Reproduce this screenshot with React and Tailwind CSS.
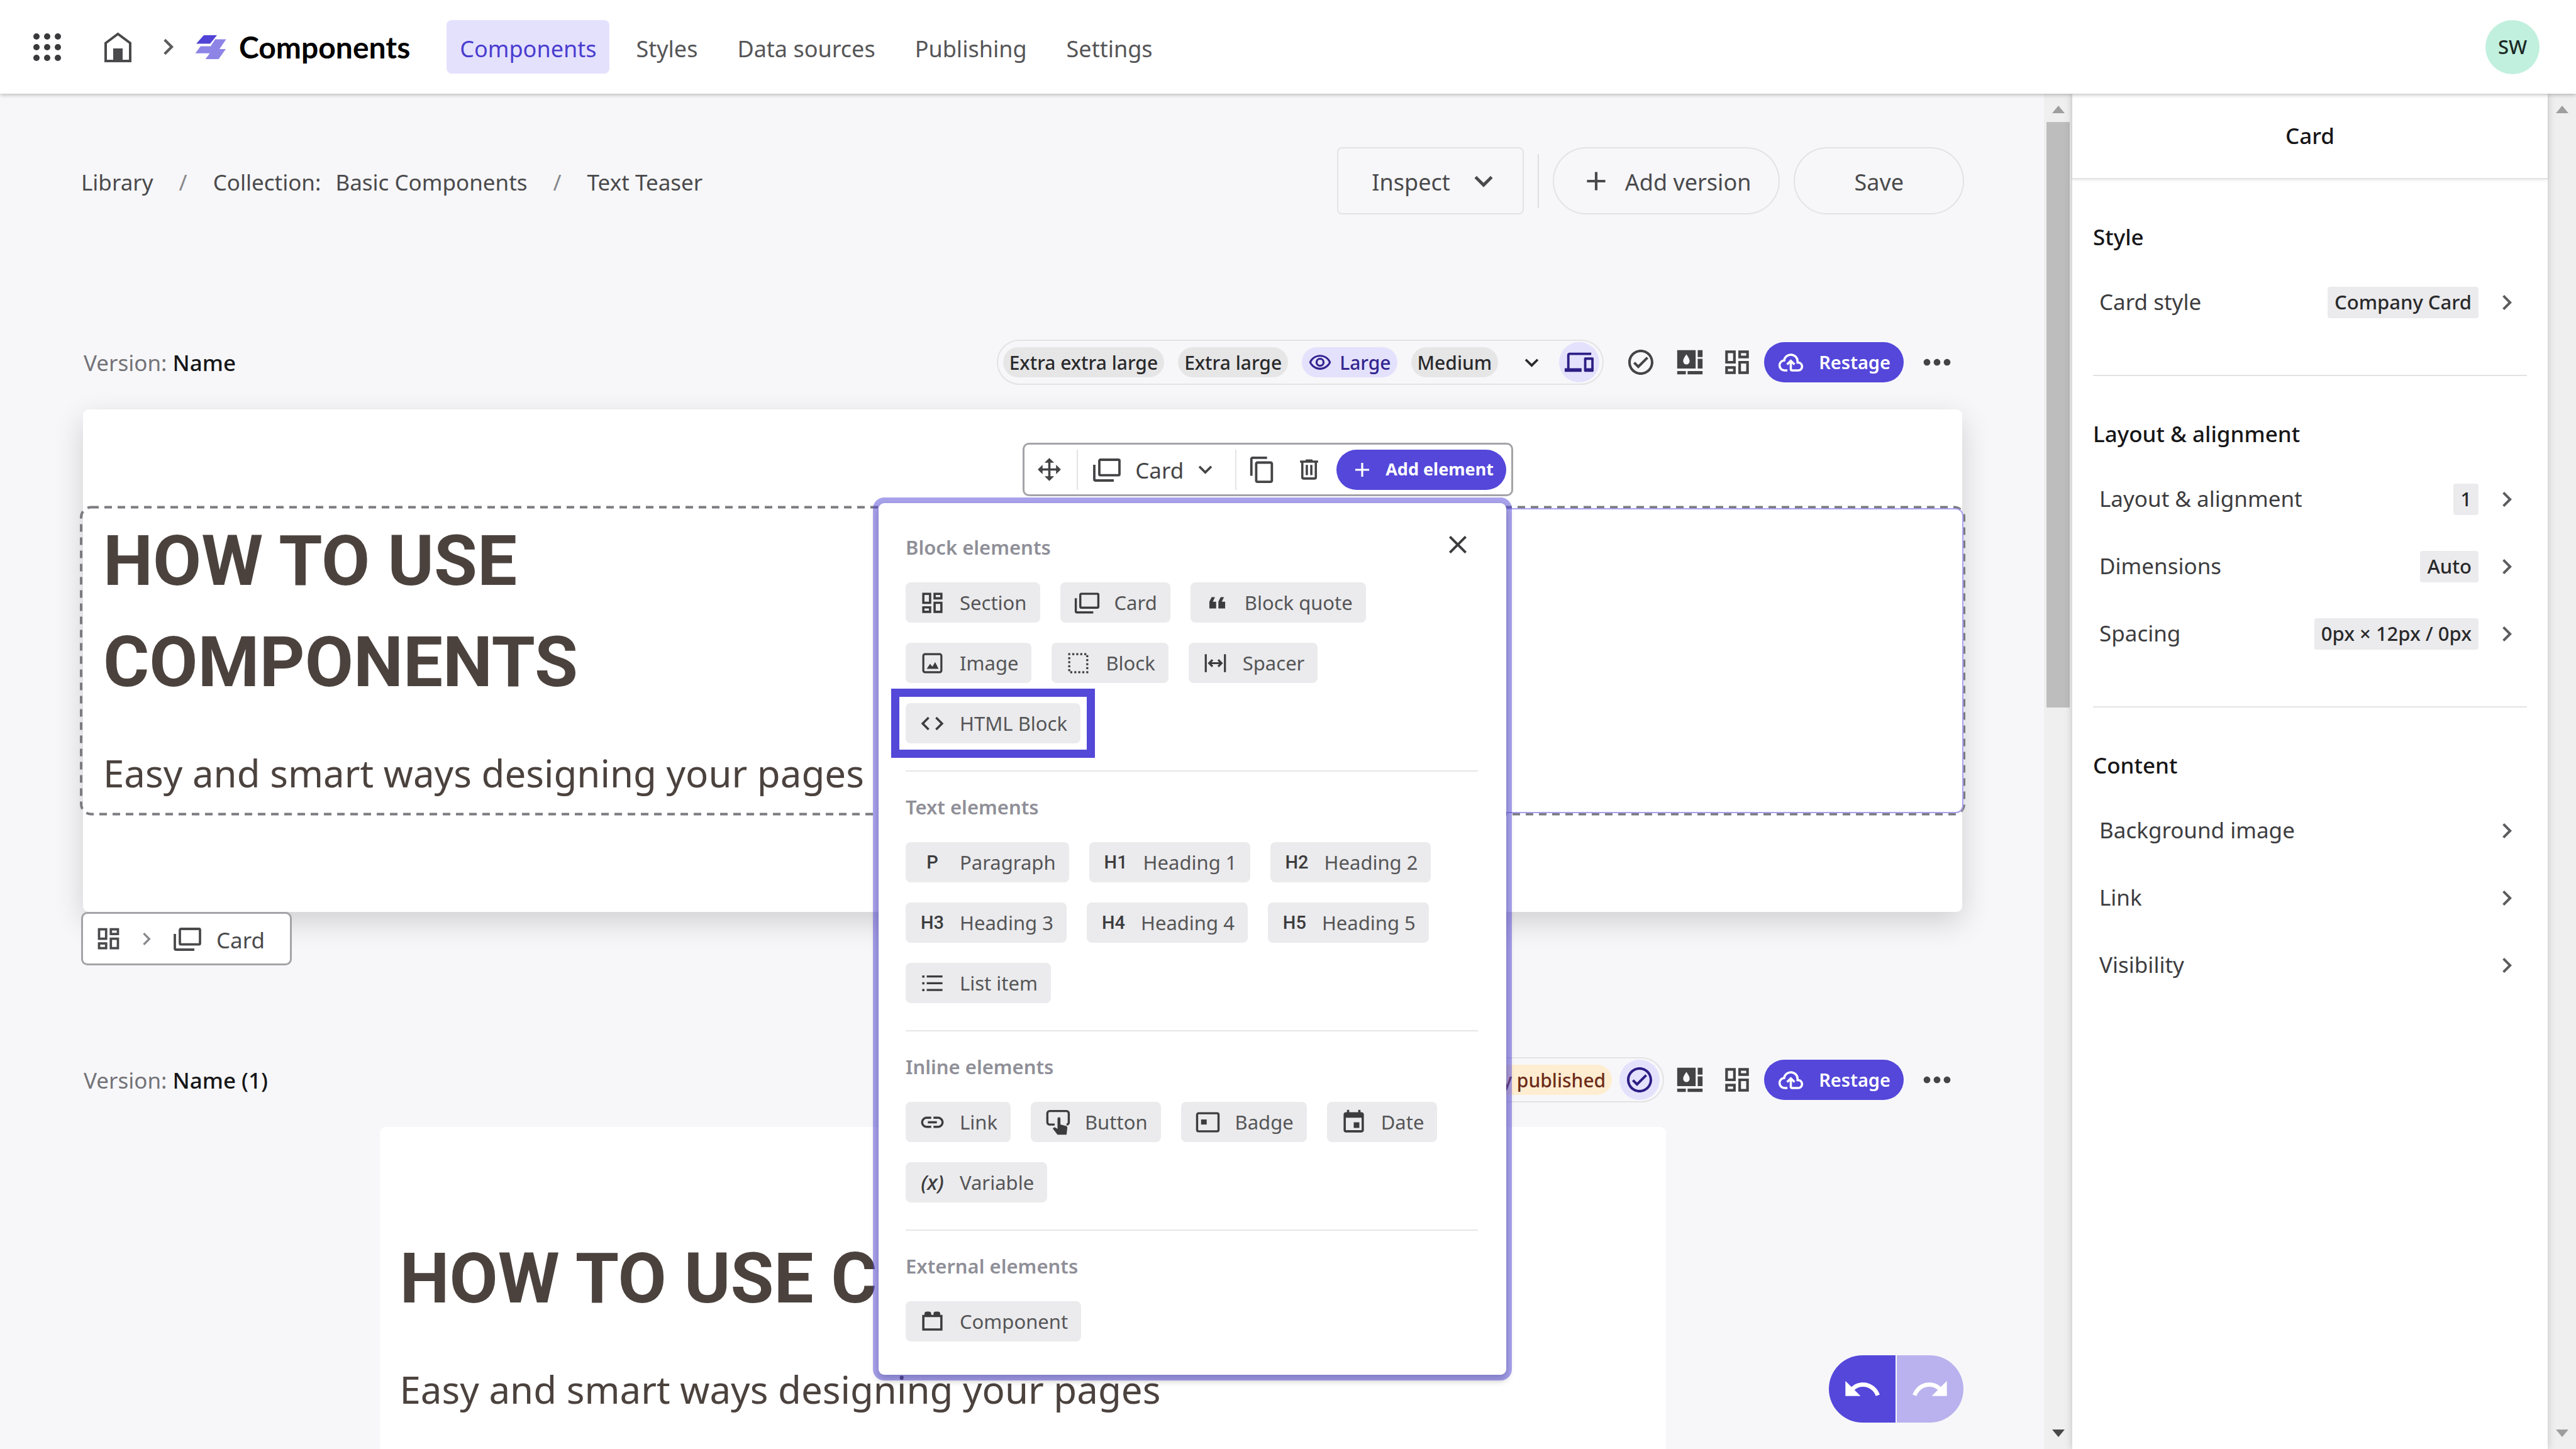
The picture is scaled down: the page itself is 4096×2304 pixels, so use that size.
import React from "react";
import {
  MdAdd,
  MdChevronRight,
  MdClose,
  MdCode,
  MdContentCopy,
  MdEvent,
  MdKeyboardArrowDown,
  MdLink,
  MdMoreHoriz,
  MdOutlineCheckCircle,
  MdOutlineDashboard,
  MdOutlineDevices,
  MdOutlineRemoveRedEye,
  MdRedo,
  MdUndo,
} from "react-icons/md";

const Svg = ({ className = "size-[43px]", children, ...rest }) => (
  <svg viewBox="0 0 24 24" fill="currentColor" aria-hidden="true" className={className} {...rest}>
    {children}
  </svg>
);

const CardIcon = ({ className }) => (
  <Svg className={className}>
    <g fill="none" stroke="currentColor" strokeWidth="1.9">
      <rect x="6" y="4" width="16" height="12.3" rx="0.8" />
      <path d="M2 8v11.5a1 1 0 0 0 1 1h14.5" />
    </g>
  </Svg>
);
const CloudIcon = ({ className }) => (
  <Svg className={className}>
    <path d="M6.5 20Q4.22 20 2.61 18.43 1 16.85 1 14.58 1 12.63 2.17 11.1 3.35 9.57 5.25 9.15 5.88 6.85 7.75 5.43 9.63 4 12 4 14.93 4 16.96 6.04 19 8.07 19 11 20.73 11.2 21.86 12.5 23 13.78 23 15.5 23 17.38 21.69 18.69 20.38 20 18.5 20H13Q12.18 20 11.59 19.41 11 18.83 11 18V12.85L9.4 14.4 8 13 12 9 16 13 14.6 14.4 13 12.85V18H18.5Q19.55 18 20.27 17.27 21 16.55 21 15.5 21 14.45 20.27 13.73 19.55 13 18.5 13H17V11Q17 8.93 15.54 7.46 14.08 6 12 6 9.93 6 8.46 7.46 7 8.93 7 11H6.5Q5.05 11 4.03 12.03 3 13.05 3 14.5 3 15.95 4.03 17 5.05 18 6.5 18H9V20Z" />
  </Svg>
);
const QuoteIcon = () => (
  <Svg>
    <path d="M10 7 8 11h3v6H5v-6l2-4h3m8 0-2 4h3v6h-6v-6l2-4h3Z" />
  </Svg>
);
const ImageIcon = () => (
  <Svg>
    <rect x="4" y="4" width="16" height="16" rx="1.5" fill="none" stroke="currentColor" strokeWidth="1.8" />
    <path d="M7 17l3-4.5 2 2.5 2.5-4L17.500 17z" />
  </Svg>
);
const BlockIcon = () => (
  <Svg>
    <path d="M4 4h16v16H4z" fill="none" stroke="currentColor" strokeWidth="1.8" strokeDasharray="1.8 1.755" strokeDashoffset="0.9" />
  </Svg>
);
const SpacerIcon = () => (
  <Svg>
    <g fill="none" stroke="currentColor" strokeWidth="1.8">
      <path d="M3.500 4v16M20.500 4v16M7 12h10M9.500 9 6.500 12l3 3M14.500 9l3 3-3 3" />
    </g>
  </Svg>
);
const ListIcon = () => (
  <Svg>
    <path d="M3 5h2v2H3zM3 11h2v2H3zM3 17h2v2H3zM7 5h14v1.900H7zM7 11h14v1.900H7zM7 17h14v1.900H7z" />
  </Svg>
);
const ButtonIcon = () => (
  <Svg>
    <path d="M9.500 14H5a2 2 0 0 1-2-2V4a2 2 0 0 1 2-2h15a2 2 0 0 1 2 2v8a2 2 0 0 1-2 2" fill="none" stroke="currentColor" strokeWidth="1.9" />
    <path d="M13.300 7.500a1.300 1.300 0 0 1 1.300 1.300v5.200l4.800 1.200c.900.200 1.400 1 1.300 1.900l-.700 5.900h-8L7.800 17.600l.800-.800c.400-.400 1-.400 1.500-.100l1.900 1.100v-9a1.300 1.300 0 0 1 1.300-1.300z" />
  </Svg>
);
const BadgeIcon = () => (
  <Svg>
    <rect x="2.500" y="4" width="19" height="16" rx="1.300" fill="none" stroke="currentColor" strokeWidth="1.9" />
    <path d="M6 9.500h5v4.500H6z" />
  </Svg>
);
const BrickIcon = () => (
  <Svg>
    <path d="M19 6V5a2 2 0 0 0-2-2h-2a2 2 0 0 0-2 2v1h-2V5a2 2 0 0 0-2-2H7a2 2 0 0 0-2 2v1H3v14h18V6M19 18H5V8h14Z" />
  </Svg>
);
const TrashIcon = () => (
  <Svg>
    <path d="M9 3v1H4v2h1v13a2 2 0 0 0 2 2h10a2 2 0 0 0 2-2V6h1V4h-5V3H9M7 6h10v13H7V6m2 2v9h2V8H9m4 0v9h2V8h-2Z" />
  </Svg>
);
const MoveIcon = () => (
  <Svg>
    <path d="M13 6v5h5V7.750L22.250 12 18 16.250V13h-5v5h3.250L12 22.250 7.750 18H11v-5H6v3.250L1.750 12 6 7.750V11h5V6H7.750L12 1.750 16.250 6H13Z" />
  </Svg>
);
const ThemeIcon = () => (
  <Svg className="size-[44px]">
    <path
      fillRule="evenodd"
      d="M1 1.500h16v16H1zM9 5C7.800 7.100 6.200 8.800 6.200 11.100a2.800 2.800 0 0 0 5.600 0C11.800 8.800 10.200 7.100 9 5z"
    />
    <path d="M18.800 1.500H23v6h-4.200zM18.800 9H23v8.500h-4.200zM1 19.700h7.500v2.800H1zM10 19.700h13v2.800H10z" />
  </Svg>
);
const Tri = ({ down, className }) => (
  <svg viewBox="0 0 20 12" className={`h-3 w-5 ${className}`} fill="currentColor" aria-hidden="true">
    <path d={down ? "M0 0h20L10 12z" : "M0 12h20L10 0z"} />
  </svg>
);

const glyph = (t) => () => (
  <span className="w-[43px] text-center font-['Roboto',sans-serif] text-[29px] leading-[36px] font-medium">{t}</span>
);
const VarIcon = () => <span className="w-[43px] text-center text-[33px] leading-[40px] font-medium italic">(x)</span>;

const GROUPS = [
  {
    title: "Block elements",
    items: [
      ["Section", () => <MdOutlineDashboard className="size-[43px]" />],
      ["Card", () => <CardIcon />],
      ["Block quote", QuoteIcon],
      ["Image", ImageIcon],
      ["Block", BlockIcon],
      ["Spacer", SpacerIcon],
      ["HTML Block", () => <MdCode className="size-[43px]" />, true],
    ],
  },
  {
    title: "Text elements",
    items: [
      ["Paragraph", glyph("P")],
      ["Heading 1", glyph("H1")],
      ["Heading 2", glyph("H2")],
      ["Heading 3", glyph("H3")],
      ["Heading 4", glyph("H4")],
      ["Heading 5", glyph("H5")],
      ["List item", ListIcon],
    ],
  },
  {
    title: "Inline elements",
    items: [
      ["Link", () => <MdLink className="size-[43px]" />],
      ["Button", ButtonIcon],
      ["Badge", BadgeIcon],
      ["Date", () => <MdEvent className="size-[43px]" />],
      ["Variable", VarIcon],
    ],
  },
  { title: "External elements", items: [["Component", BrickIcon]] },
];

const SETTINGS = [
  { title: "Style", rows: [["Card style", "Company Card"]] },
  {
    title: "Layout & alignment",
    rows: [
      ["Layout & alignment", "1"],
      ["Dimensions", "Auto"],
      ["Spacing", "0px × 12px / 0px"],
    ],
  },
  { title: "Content", rows: [["Background image"], ["Link"], ["Visibility"]] },
];

function Header() {
  return (
    <header className="relative z-20 flex h-[149px] shrink-0 items-center bg-white pr-[58px] pl-[53px] shadow-[0_2px_6px_rgba(0,0,0,0.25)]">
      <button type="button" aria-label="Apps">
        <svg viewBox="0 0 44 44" className="size-[44px]" fill="#3a3a3c">
          {[5, 22, 39].map((y) => [5, 22, 39].map((x) => <circle key={`${x}-${y}`} cx={x} cy={y} r="5" />))}
        </svg>
      </button>
      <a href="#home" aria-label="Home" className="ml-[69px]">
        <svg viewBox="0 0 43 48" className="h-[48px] w-[43px]">
          <path d="M2 17.500 21.500 3 41 17.500V46H2z" fill="none" stroke="#4a4a4c" strokeWidth="4" />
          <path d="M14 26h15v20H14z" fill="#4a4a4c" />
        </svg>
      </a>
      <MdChevronRight className="ml-[33px] size-[51px] text-[#5c5c5e]" />
      <svg viewBox="0 0 50 40" className="ml-[17px] h-10 w-[50px]" aria-hidden="true">
        <path d="M14 1h21l-11 13.500H2z" fill="#5043d6" />
        <path d="M32 7.500h17.500L39 23h10L37.600 39h-21l7-9.300H.500L9 18.500h16z" fill="#8d84e6" />
      </svg>
      <span className="ml-5 font-['Lato',sans-serif] text-[48px] leading-[56px] font-bold text-black">Components</span>
      <nav className="ml-[58px] flex gap-[21px]">
        {["Components", "Styles", "Data sources", "Publishing", "Settings"].map((n, i) => (
          <a
            key={n}
            href={`#${n}`}
            className={`flex h-[85px] items-center rounded-lg px-[21px] pt-[6px] text-[36px] ${i === 0 ? "bg-[#e4e1fd] text-[#4a3dcf]" : "text-[#555557]"}`}
          >
            {n}
          </a>
        ))}
      </nav>
      <button type="button" className="ml-auto flex size-[86px] items-center justify-center rounded-full bg-[#c1f0de] text-[31px] font-medium text-[#1c2a26]">
        SW
      </button>
    </header>
  );
}

function Scrollbar({ thumb, dark }) {
  return (
    <div className="flex w-[45px] shrink-0 flex-col items-center bg-[#efefef] pt-[19px] pb-[19px]" aria-hidden="true">
      <Tri className="text-[#9e9e9e]" />
      {thumb && <div className="mt-[14px] h-[44%] w-[37px] bg-[#bdbdbd]" />}
      <Tri down className={`mt-auto ${dark ? "text-[#4a4a4a]" : "text-[#9e9e9e]"}`} />
    </div>
  );
}

const pill = "flex h-12 items-center rounded-full px-[10px] text-[30px] font-medium";
const round = "flex size-16 items-center justify-center rounded-full";

function VersionRow({ name, className, children, check }) {
  return (
    <div className={`flex h-[72px] items-center pr-[11px] pl-1 ${className}`}>
      <h2 className="pt-[3px] text-[35px] text-[#737378]">
        Version: <span className="font-medium text-[#161618]">{name}</span>
      </h2>
      <div className="ml-auto flex items-center text-[#444446]">
        {children}
        {check && (
          <button type="button" aria-label="Status" className={`${round} ml-[27px]`}>
            <MdOutlineCheckCircle className="size-[48px]" />
          </button>
        )}
        <button type="button" aria-label="Theme" className={`${round} ${check ? "ml-[14px]" : "ml-[9px]"}`}>
          <ThemeIcon />
        </button>
        <button type="button" aria-label="Layout" className={`${round} ml-[11px]`}>
          <MdOutlineDashboard className="size-[50px]" />
        </button>
        <button type="button" className="ml-[11px] flex h-16 items-center rounded-full bg-[#5447da] px-[21px] text-[29px] font-semibold text-white">
          <CloudIcon className="mr-[23px] size-[43px]" />
          Restage
        </button>
        <button type="button" aria-label="More" className={`${round} ml-[21px]`}>
          <MdMoreHoriz className="size-[64px]" />
        </button>
      </div>
    </div>
  );
}

function Teaser({ narrow }) {
  return (
    <>
      <h1 className={`font-['Roboto',sans-serif] text-[112px] leading-[161px] font-bold text-[#4b423e] ${narrow ? "max-w-[1200px]" : ""}`}>
        HOW TO USE COMPONENTS
      </h1>
      <p className="mt-[46px] text-[60px] leading-[100px] whitespace-nowrap text-[#4b423e]">Easy and smart ways designing your pages</p>
    </>
  );
}

function Toolbar() {
  return (
    <div className="flex h-[85px] items-center rounded-[10px] border-[3px] border-[#a3a3a8] bg-white pr-2 pl-[18px] text-[#444446]">
      <button type="button" aria-label="Move">
        <MoveIcon />
      </button>
      <span className="ml-[22px] h-16 w-[2px] bg-[#e4e4e6]" />
      <button type="button" className="ml-[22px] flex items-center text-[35px]">
        <CardIcon className="size-[48px]" />
        <span className="ml-[21px] pt-[3px]">Card</span>
        <MdKeyboardArrowDown className="ml-[13px] size-[43px]" />
      </button>
      <span className="ml-[26px] h-16 w-[2px] bg-[#e4e4e6]" />
      <button type="button" aria-label="Duplicate" className="ml-[18px]">
        <MdContentCopy className="size-[46px]" />
      </button>
      <button type="button" aria-label="Delete" className="ml-[30px]">
        <TrashIcon />
      </button>
      <button type="button" className="ml-[22px] flex h-16 items-center rounded-full bg-[#5447da] pr-5 pl-[22px] text-[27px] font-bold text-white">
        <MdAdd className="mr-[18px] size-[38px]" />
        Add element
      </button>
    </div>
  );
}

function ElementPicker() {
  return (
    <div
      role="dialog"
      aria-label="Add element"
      className="relative mt-[11px] mr-[11px] w-[998px] rounded-[9px] bg-white pt-[50px] pr-[45px] pb-[53px] pl-[43px] shadow-[0_0_0_9px_rgba(84,71,218,0.5),0_6px_12px_2px_rgba(0,0,0,0.3)]"
    >
      <button type="button" aria-label="Close" className="absolute top-[42px] right-[53px] text-[#3c3c3e]">
        <MdClose className="size-[48px]" />
      </button>
      {GROUPS.map((g, i) => (
        <section key={g.title} className={i ? "mt-[43px] border-t-2 border-[#e6e6e8] pt-[36px]" : ""}>
          <h3 className="text-[31px] leading-[40px] font-semibold text-[#8f8f98]">{g.title}</h3>
          <div className="mt-[36px] flex flex-wrap gap-8">
            {g.items.map(([label, Icon, marked]) => (
              <button
                key={label}
                type="button"
                className="relative flex h-16 items-center gap-[22px] rounded-lg bg-[#ebebed] px-[21px] text-[31px] text-[#555557]"
              >
                <span className="flex text-[#3c3c3e]">
                  <Icon />
                </span>
                {label}
                {marked && <span className="absolute -inset-[23px] border-[13px] border-[#5348d8]" />}
              </button>
            ))}
          </div>
        </section>
      ))}
    </div>
  );
}

function Canvas() {
  return (
    <main className="relative min-w-0 flex-1 overflow-hidden bg-[#f7f7f9] pr-[127px] pl-[129px]">
      <div className="mt-[85px] flex h-[107px] items-center">
        <nav aria-label="Breadcrumb" className="flex items-center gap-[41px] pt-[5px] text-[35px] text-[#4a4a4c]">
          <a href="#library">Library</a>
          <span className="text-[#88888c]">/</span>
          <a href="#collection" className="flex gap-[23px]">
            <span>Collection:</span>
            <span>Basic Components</span>
          </a>
          <span className="text-[#88888c]">/</span>
          <a href="#teaser">Text Teaser</a>
        </nav>
        <div className="ml-auto flex items-center text-[36px] text-[#4a4a4c]">
          <button type="button" className="flex h-[107px] items-center rounded-lg border-2 border-[#e3e3e5] pr-[33px] pl-[53px]">
            <span className="pt-[5px]">Inspect</span>
            <MdKeyboardArrowDown className="ml-[24px] size-[58px]" />
          </button>
          <span className="ml-[22px] h-[86px] w-[2px] bg-[#dedee0]" />
          <button type="button" className="ml-[22px] flex h-[107px] items-center rounded-full border-2 border-[#e3e3e5] pr-[44px] pl-[42px]">
            <MdAdd className="mr-[21px] size-[50px]" />
            <span className="pt-[5px]">Add version</span>
          </button>
          <button type="button" className="ml-[22px] h-[107px] rounded-full border-2 border-[#e3e3e5] px-[94px]">
            <span className="block pt-[5px]">Save</span>
          </button>
        </div>
      </div>

      <VersionRow name="Name" className="mt-[199px]" check>
        <div className="flex h-[72px] items-center gap-[22px] rounded-full border-2 border-[#e3e3e5] pr-[5px] pl-2 text-[#29292b]">
          <span className={`${pill} bg-[#e6e6e7]`}>Extra extra large</span>
          <span className={`${pill} bg-[#e6e6e7]`}>Extra large</span>
          <span className={`${pill} bg-[#e4e1fd] text-[#33258f]`}>
            <MdOutlineRemoveRedEye className="mr-[12px] size-[38px]" />
            Large
          </span>
          <span className={`${pill} bg-[#e6e6e7]`}>Medium</span>
          <button type="button" aria-label="More sizes" className="ml-[10px]">
            <MdKeyboardArrowDown className="size-[43px]" />
          </button>
          <button type="button" aria-label="Devices" className={`${round} bg-[#e4e1fd] text-[#2c1e85]`}>
            <MdOutlineDevices className="size-[46px]" />
          </button>
        </div>
      </VersionRow>

      <div className="mx-[3px] mt-[39px] rounded-[9px] bg-white py-[153px] shadow-[0_16px_48px_rgba(0,0,0,0.16)]">
        <div className="relative -mx-[6px] h-[493px] pt-[7px] pl-[38px]">
          <svg className="absolute inset-0 size-full" fill="none" aria-hidden="true">
            <rect x="0.1%" y="0.5%" width="99.8%" height="99%" rx="16" stroke="#7b7b80" strokeWidth="4" strokeDasharray="12 9" />
          </svg>
          <div className="absolute inset-y-1 right-1 left-1/2 rounded-r-[12px] border-2 border-l-0 border-[#a9a1ee]" />
          <Teaser narrow />
          <div className="absolute -top-[100px] right-[720px] z-10 flex flex-col items-end">
            <Toolbar />
            <ElementPicker />
          </div>
        </div>
      </div>

      <div className="relative flex h-[85px] w-fit items-center rounded-[10px] border-[3px] border-[#a3a3a8] bg-white pr-[40px] pl-[18px] text-[35px] text-[#4a4a4c]">
        <MdOutlineDashboard className="size-[45px]" />
        <MdChevronRight className="ml-[18px] size-[40px] text-[#88888c]" />
        <CardIcon className="ml-[21px] size-[48px]" />
        <span className="ml-[22px] pt-[5px]">Card</span>
      </div>

      <VersionRow name="Name (1)" className="mt-[146px]">
        <div className="flex h-[72px] items-center gap-[12px] rounded-full border-2 border-[#e3e3e5] pr-[5px] pl-2">
          <span className={`${pill} bg-[#ffedd1] text-[#6d2c1a]`}>Currently published</span>
          <button type="button" aria-label="Status" className={`${round} bg-[#e4e1fd] text-[#2c1e85]`}>
            <MdOutlineCheckCircle className="size-[48px]" />
          </button>
        </div>
      </VersionRow>

      <div className="mx-auto mt-[39px] h-[600px] max-w-[2045px] rounded-[9px] bg-white pt-[160px] pl-[32px]">
        <Teaser />
      </div>

      <div className="absolute right-[128px] bottom-[42px] z-10 flex gap-[2px] text-white">
        <button type="button" aria-label="Undo" className="flex h-[107px] w-[106px] items-center justify-center rounded-l-full bg-[#5447da]">
          <MdUndo className="size-[64px]" />
        </button>
        <button type="button" aria-label="Redo" className="flex h-[107px] w-[106px] items-center justify-center rounded-r-full bg-[#b9b2ee]">
          <MdRedo className="size-[64px]" />
        </button>
      </div>
    </main>
  );
}

function Inspector() {
  return (
    <aside className="relative w-[756px] shrink-0 bg-white shadow-[0_0_12px_rgba(0,0,0,0.2)]">
      <h2 className="flex h-[136px] items-center justify-center border-b-2 border-[#e3e3e5] text-[35px] font-medium text-[#161618] shadow-[0_2px_4px_rgba(0,0,0,0.08)]">Card</h2>
      <div className="px-[33px]">
        {SETTINGS.map((s, i) => (
          <section key={s.title} className={i < 2 ? "border-b-2 border-[#e3e3e5] pt-[64px] pb-[62px]" : "pt-[64px]"}>
            <h3 className="text-[35px] leading-[56px] font-medium text-[#161618]">{s.title}</h3>
            <div className="mt-[22px]">
              {s.rows.map(([label, value]) => (
                <button key={label} type="button" className="flex h-[107px] w-full items-center pr-[8px] pl-[10px] text-left text-[35px] text-[#3d3d3f]">
                  {label}
                  <span className="ml-auto flex items-center gap-[21px]">
                    {value && <span className="flex h-[50px] items-center rounded-[4px] bg-[#ebebed] px-[11px] text-[31px] font-medium text-[#29292b]">{value}</span>}
                    <MdChevronRight className="size-[48px] text-[#5c5c5e]" />
                  </span>
                </button>
              ))}
            </div>
          </section>
        ))}
      </div>
    </aside>
  );
}

export default function App() {
  return (
    <div className="flex h-screen flex-col overflow-hidden font-['Noto_Sans','Open_Sans',sans-serif]">
      <Header />
      <div className="flex min-h-0 flex-1">
        <Canvas />
        <Scrollbar thumb dark />
        <Inspector />
        <Scrollbar />
      </div>
    </div>
  );
}
